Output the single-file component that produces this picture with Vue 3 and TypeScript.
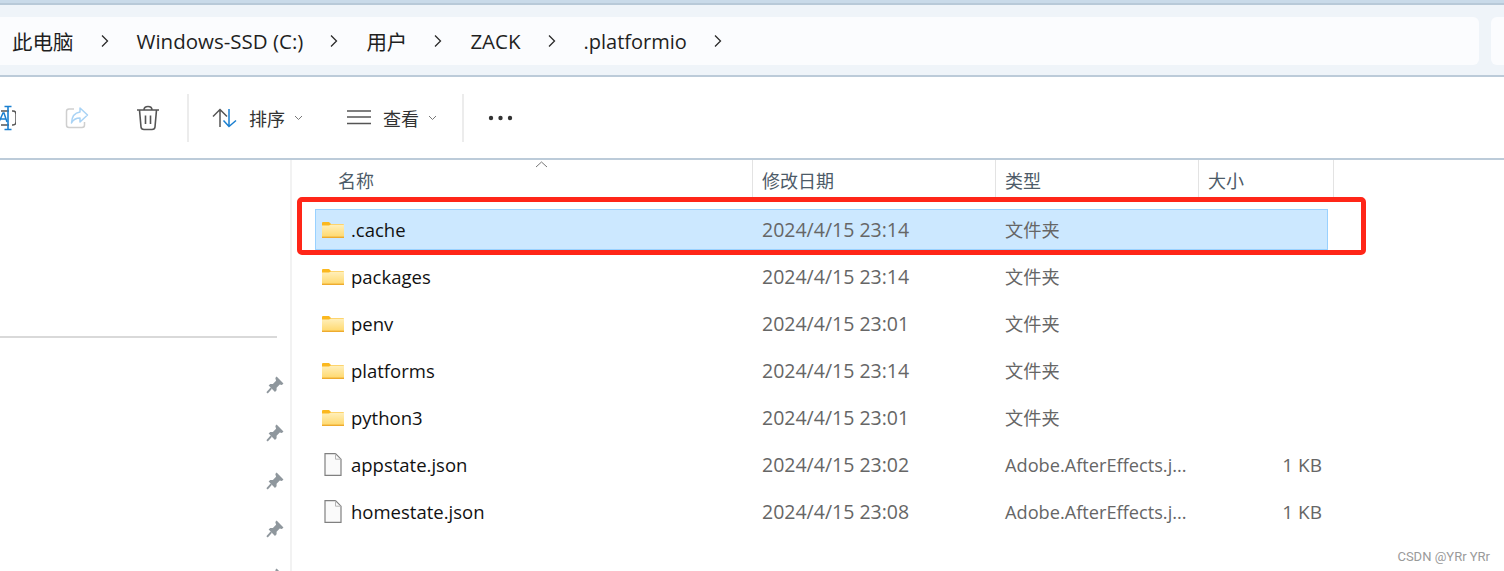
<script setup lang="ts">
interface Row {
  name: string
  date: string
  type: string
  size: string
  folder: boolean
  selected?: boolean
}

const crumbs = ['此电脑', 'Windows-SSD (C:)', '用户', 'ZACK', '.platformio']

const rows: Row[] = [
  { name: '.cache', date: '2024/4/15 23:14', type: '文件夹', size: '', folder: true, selected: true },
  { name: 'packages', date: '2024/4/15 23:14', type: '文件夹', size: '', folder: true },
  { name: 'penv', date: '2024/4/15 23:01', type: '文件夹', size: '', folder: true },
  { name: 'platforms', date: '2024/4/15 23:14', type: '文件夹', size: '', folder: true },
  { name: 'python3', date: '2024/4/15 23:01', type: '文件夹', size: '', folder: true },
  { name: 'appstate.json', date: '2024/4/15 23:02', type: 'Adobe.AfterEffects.j...', size: '1 KB', folder: false },
  { name: 'homestate.json', date: '2024/4/15 23:08', type: 'Adobe.AfterEffects.j...', size: '1 KB', folder: false },
]

const pins = [1, 2, 3, 4, 5]
</script>

<template>
  <div class="window">
    <div class="top-strip"></div>

    <div class="address-band">
      <div class="address">
        <template v-for="c in crumbs" :key="c">
          <span class="crumb">{{ c }}</span>
          <svg class="chevron" width="10" height="14" viewBox="0 0 10 14">
            <path d="M2 1.5 L7.5 7 L2 12.500" fill="none" stroke="#2a2a2a" stroke-width="1.3" />
          </svg>
        </template>
      </div>
      <div class="search"></div>
    </div>

    <div class="toolbar">
      <div class="rename-clip">
        <svg width="32" height="26" viewBox="0 0 32 26">
          <path d="M9 6 H1 M1 20 H9" fill="none" stroke="#555" stroke-width="1.5" />
          <path d="M12 6 H13 Q16 6 16 9 V17 Q16 20 13 20 H12" fill="none" stroke="#555" stroke-width="1.5" />
          <path d="M-1 17 L3 8 H4 L7 17 M0 14 H6" fill="none" stroke="#1a7fd0" stroke-width="1.5" />
          <path d="M4.500 1.500 H11.500 M8 1.500 V24.500 M4.500 24.500 H11.500" fill="none" stroke="#1a7fd0" stroke-width="1.600" />
        </svg>
      </div>
      <svg class="share" width="24" height="24" viewBox="0 0 24 24">
        <path d="M9 3 H4 Q1.500 3 1.500 5.500 V19 Q1.500 21.500 4 21.500 H17 Q19.500 21.500 19.500 19 V16" fill="none" stroke="#cfcfcf" stroke-width="1.500" />
        <path d="M15 2 L22.500 9 L15 16 V12 Q9 12 6.500 17 Q7 7 15 6 Z" fill="#fff" stroke="#a9d3f5" stroke-width="1.500" stroke-linejoin="round" />
      </svg>
      <svg class="trash" width="24" height="26" viewBox="0 0 24 26">
        <path d="M1 5 H23 M8 5 Q8 1.500 12 1.500 Q16 1.500 16 5" fill="none" stroke="#555" stroke-width="1.600" />
        <path d="M3.500 5 L5 22 Q5.300 24.500 8 24.500 H16 Q18.700 24.500 19 22 L20.500 5" fill="none" stroke="#555" stroke-width="1.600" />
        <path d="M9.500 10.500 V19 M14.500 10.500 V19" fill="none" stroke="#555" stroke-width="1.600" />
      </svg>
      <div class="tool-sep first"></div>
      <svg class="sort" width="26" height="20" viewBox="0 0 26 20">
        <path d="M8 19 V1.500 M1 8.500 L8 1.500 L15 8.500" fill="none" stroke="#555" stroke-width="1.500" />
        <path d="M17 1 V18.500 M11.500 12.500 L17 18.500 L24 12.500" fill="none" stroke="#1a7fd0" stroke-width="1.500" />
      </svg>
      <span class="tool-label sort-label">排序</span>
      <svg class="caret" width="9" height="6" viewBox="0 0 9 6">
        <path d="M1 1 L4.500 4.500 L8 1" fill="none" stroke="#777" stroke-width="1" />
      </svg>
      <svg class="lines" width="25" height="17" viewBox="0 0 25 17">
        <path d="M0 2 H24 M0 8 H24 M0 14.500 H24" fill="none" stroke="#555" stroke-width="1.400" />
      </svg>
      <span class="tool-label view-label">查看</span>
      <svg class="caret" width="9" height="6" viewBox="0 0 9 6">
        <path d="M1 1 L4.500 4.500 L8 1" fill="none" stroke="#777" stroke-width="1" />
      </svg>
      <div class="tool-sep second"></div>
      <svg class="more" width="25" height="6" viewBox="0 0 25 6">
        <circle cx="3" cy="3" r="2.200" fill="#333" />
        <circle cx="12.500" cy="3" r="2.200" fill="#333" />
        <circle cx="22" cy="3" r="2.200" fill="#333" />
      </svg>
    </div>

    <div class="body">
      <aside class="sidebar">
        <div class="side-line"></div>
        <div class="pins">
          <svg v-for="p in pins" :key="p" width="18" height="18" viewBox="0 0 17 17">
            <path d="M10 .5 L16.500 7 L15 8.500 L13 8 L10 11 L10 13.500 L8.500 15 L2.500 9 L4 7.500 L6.500 7.500 L9.500 4.500 L8.800 2 Z" fill="#8f979d" />
            <path d="M5 11.500 L1 16" stroke="#8f979d" stroke-width="1.800" fill="none" />
          </svg>
        </div>
      </aside>

      <main class="list">
        <div class="head">
          <svg class="sort-mark" width="13" height="7" viewBox="0 0 13 7">
            <path d="M1 6 L6.500 1 L12 6" fill="none" stroke="#777" stroke-width="1" />
          </svg>
          <div class="hcell h-name">名称</div>
          <div class="hcell h-date">修改日期</div>
          <div class="hcell h-type">类型</div>
          <div class="hcell h-size">大小</div>
        </div>

        <div class="rows">
          <div v-for="r in rows" :key="r.name" class="row" :class="{ selected: r.selected }">
            <div class="name">
              <svg v-if="r.folder" width="22" height="16" viewBox="0 0 22 16">
                <defs>
                  <linearGradient id="fold" x1="0" y1="0" x2="0" y2="1">
                    <stop offset="0" stop-color="#fff0bd" />
                    <stop offset="1" stop-color="#ffd768" />
                  </linearGradient>
                </defs>
                <path d="M0 1 Q0 0 1 0 H7 L9 2 H21 Q22 2 22 3 V5 H0 Z" fill="#fbb81f" />
                <path d="M0 3.500 H7 L9 2.500 H22 V15 Q22 16 21 16 H1 Q0 16 0 15 Z" fill="url(#fold)" />
                <path d="M0 15.300 H22" stroke="#eeab2e" stroke-width="1.400" />
              </svg>
              <svg v-else class="file" width="18" height="23" viewBox="0 0 18 23">
                <path d="M1 .7 H11.500 L17 6.200 V22.300 H1 Z" fill="#fafafa" stroke="#808080" stroke-width="1.200" />
                <path d="M11.500 .7 V6.200 H17" fill="none" stroke="#b5b5b5" stroke-width="1" />
              </svg>
              <span class="name-text">{{ r.name }}</span>
            </div>
            <div class="date">{{ r.date }}</div>
            <div class="type" :class="{ cjk: r.folder }">{{ r.type }}</div>
            <div class="size">{{ r.size }}</div>
          </div>
        </div>

        <div class="highlight"></div>
        <div class="watermark">CSDN @YRr YRr</div>
      </main>
    </div>
  </div>
</template>

<style>
html, body {
  margin: 0;
  background: #fff;
  overflow: hidden;
}
</style>

<style scoped>
.window {
  width: 1504px;
  height: 571px;
  overflow: hidden;
  display: flex;
  flex-direction: column;
  font-family: "Open Sans", "Noto Sans CJK SC", sans-serif;
  background: #fff;
}

.top-strip {
  height: 3px;
  background: #c9dae9;
  border-bottom: 2px solid #b8c9d8;
}

.address-band {
  height: 48px;
  padding: 12px 0 10px;
  display: flex;
  gap: 12px;
  background: #eff4f9;
  border-bottom: 2px solid #bccbd9;
}

.address {
  width: 1479px;
  display: flex;
  align-items: center;
  padding-left: 12px;
  box-sizing: border-box;
  background: #fbfcfe;
  border-radius: 0 6px 6px 0;
  color: #1f1f1f;
  font-size: 20.5px;
}

.crumb {
  white-space: nowrap;
}

.crumb:last-of-type {
  font-size: 20px;
}

.chevron {
  margin: 0 27px 0 26px;
  flex: none;
}

.search {
  flex: 1;
  background: #fbfcfe;
  border-radius: 6px 0 0 6px;
}

.toolbar {
  height: 81px;
  display: flex;
  align-items: center;
  background: #fff;
  border-bottom: 2px solid #bccbd9;
  box-sizing: content-box;
}

.rename-clip {
  width: 16px;
  height: 26px;
  flex: none;
  overflow: hidden;
}

.share {
  margin-left: 49px;
  flex: none;
}

.trash {
  margin-left: 47px;
  flex: none;
}

.tool-sep {
  width: 2px;
  height: 48px;
  background: #ececec;
  flex: none;
}

.tool-sep.first {
  margin-left: 27px;
}

.sort {
  margin-left: 23px;
  flex: none;
}

.tool-label {
  font-size: 18px;
  color: #333;
  font-family: "Noto Sans CJK SC", sans-serif;
}

.sort-label {
  margin-left: 11px;
}

.caret {
  margin-left: 9px;
  flex: none;
}

.lines {
  margin-left: 44px;
  flex: none;
}

.view-label {
  margin-left: 11px;
}

.tool-sep.second {
  margin-left: 25px;
}

.more {
  margin-left: 24px;
  flex: none;
}

.body {
  flex: 1;
  display: flex;
  min-height: 0;
}

.sidebar {
  width: 290px;
  flex: none;
  border-right: 2px solid #f2f2f2;
  padding-top: 176px;
  box-sizing: content-box;
}

.side-line {
  width: 277px;
  height: 2px;
  background: #d9d9d9;
}

.pins {
  margin-top: 38px;
  padding-right: 6px;
  display: flex;
  flex-direction: column;
  align-items: flex-end;
  gap: 30px;
}

.list {
  flex: 1;
  position: relative;
  min-width: 0;
}

.head {
  height: 38px;
  display: flex;
  position: relative;
}

.sort-mark {
  position: absolute;
  left: 243px;
  top: 1px;
}

.hcell {
  height: 38px;
  box-sizing: border-box;
  padding-top: 7px;
  font-size: 18px;
  line-height: 26px;
  color: #4d5b68;
  font-family: "Noto Sans CJK SC", sans-serif;
  border-right: 1px solid #e3e3e3;
  flex: none;
}

.h-name {
  width: 461px;
  padding-left: 46px;
}

.h-date {
  width: 243px;
  padding-left: 9px;
}

.h-type {
  width: 203px;
  padding-left: 9px;
}

.h-size {
  width: 135px;
  padding-left: 9px;
}

.rows {
  padding: 11px 0 0 23px;
  display: flex;
  flex-direction: column;
  gap: 6px;
}

.row {
  width: 1013px;
  height: 41px;
  box-sizing: border-box;
  display: grid;
  grid-template-columns: 446px 243px 193px 1fr;
  align-items: center;
  border: 1px solid transparent;
  font-size: 19.5px;
  color: #666;
}

.row.selected {
  background: #cce8ff;
  border-color: #99d1ff;
}

.name {
  display: flex;
  align-items: center;
  padding-left: 6px;
  color: #111;
  font-size: 18.5px;
}

.name svg {
  flex: none;
}

.name svg.file {
  margin: 0 2px;
}

.name-text {
  margin-left: 7px;
}

.type {
  white-space: nowrap;
  font-size: 18.2px;
}

.type.cjk {
  line-height: 24px;
}

.size {
  text-align: right;
  padding-right: 5px;
  font-size: 19px;
}

.highlight {
  position: absolute;
  left: 5px;
  top: 37px;
  width: 1069px;
  height: 58px;
  box-sizing: border-box;
  border: 5px solid #ff2618;
  border-radius: 5px;
  pointer-events: none;
}

.watermark {
  position: absolute;
  right: 14px;
  bottom: 7px;
  font-family: Roboto, sans-serif;
  font-size: 13px;
  color: #9a9a9a;
}
</style>
